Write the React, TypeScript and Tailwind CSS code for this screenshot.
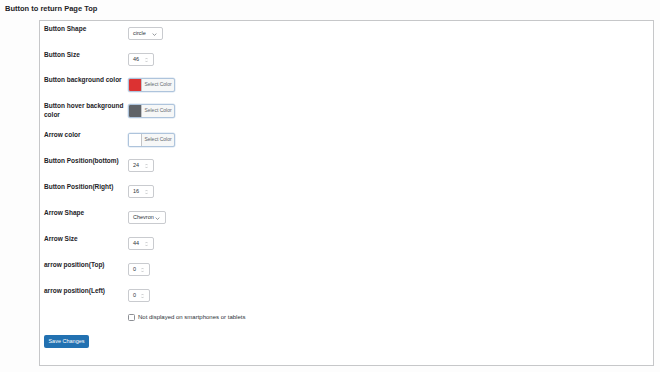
import React from "react";

const font = { fontFamily: '"Liberation Sans", Arial, sans-serif' };

function Label({ children }: { children: React.ReactNode }) {
  return (
    <div className="w-[84px] shrink-0 whitespace-nowrap text-[6.5px] font-bold leading-[9px] text-[#1d2327]">
      {children}
    </div>
  );
}

function SelectBox({ value, w }: { value: string; w: string }) {
  return (
    <div
      className={`mt-[3px] flex h-[13px] ${w} items-center justify-between rounded-[2px] border border-[#c9cbcf] bg-white pl-[4px] pr-[5px] text-[5.5px] text-[#2c3338]`}
    >
      <span>{value}</span>
      <svg width="5" height="3" viewBox="0 0 5 3" className="mt-[1px]">
        <path d="M0.6 0.6 L2.5 2.4 L4.4 0.6" fill="none" stroke="#50575e" strokeWidth="0.6" />
      </svg>
    </div>
  );
}

function NumberBox({ value, w }: { value: string; w: string }) {
  return (
    <div
      className={`mt-[3px] flex h-[13px] ${w} items-center justify-between rounded-[2px] border border-[#c9cbcf] bg-white pl-[4px] pr-[5px] text-[5.5px] text-[#2c3338]`}
    >
      <span>{value}</span>
      <svg width="3" height="6" viewBox="0 0 3 6">
        <path d="M0.4 2.2 L1.5 1 L2.6 2.2 M0.4 3.8 L1.5 5 L2.6 3.8" fill="none" stroke="#9ca0a5" strokeWidth="0.5" />
      </svg>
    </div>
  );
}

function ColorBox({ color }: { color: string }) {
  return (
    <div className="mt-[3px] flex h-[14px] w-[47px] overflow-hidden rounded-[2px] border border-[#aec4dc] bg-[#f6f7f7] shadow-[0_0_0_0.5px_#d6e2ef]">
      <div className="h-full w-[13px] border-r border-[#c3c4c7]" style={{ backgroundColor: color }} />
      <div className="flex flex-1 items-center justify-center text-[5px] text-[#646970]">Select Color</div>
    </div>
  );
}

function Row({ h, label, children }: { h: string; label: React.ReactNode; children: React.ReactNode }) {
  return (
    <div className={`flex ${h}`}>
      <Label>{label}</Label>
      <div>{children}</div>
    </div>
  );
}

export default function App() {
  return (
    <div className="h-[372px] w-[660px] bg-[#fdfdfd]" style={font}>
      <div className="pl-[5px] pt-[4px] text-[7.5px] font-bold leading-[10px] text-[#1d2327]">
        Button to return Page Top
      </div>
      <div className="ml-[39px] mt-[6px] h-[346px] w-[615px] border border-[#c6c7c9] bg-white pl-[4px] pt-[3px]">
        <Row h="h-[26px]" label="Button Shape">
          <SelectBox value="circle" w="w-[35px]" />
        </Row>
        <Row h="h-[25px]" label="Button Size">
          <NumberBox value="46" w="w-[26px]" />
        </Row>
        <Row h="h-[26px]" label="Button background color">
          <ColorBox color="#dc3232" />
        </Row>
        <Row h="h-[29px]" label={<>Button hover background<br />color</>}>
          <ColorBox color="#5f6368" />
        </Row>
        <Row h="h-[26px]" label="Arrow color">
          <ColorBox color="#ffffff" />
        </Row>
        <Row h="h-[26px]" label="Button Position(bottom)">
          <NumberBox value="24" w="w-[26px]" />
        </Row>
        <Row h="h-[26px]" label="Button Position(Right)">
          <NumberBox value="16" w="w-[26px]" />
        </Row>
        <Row h="h-[26px]" label="Arrow Shape">
          <SelectBox value="Chevron" w="w-[38px]" />
        </Row>
        <Row h="h-[26px]" label="Arrow Size">
          <NumberBox value="44" w="w-[26px]" />
        </Row>
        <Row h="h-[26px]" label="arrow position(Top)">
          <NumberBox value="0" w="w-[22px]" />
        </Row>
        <Row h="h-[25px]" label="arrow position(Left)">
          <NumberBox value="0" w="w-[22px]" />
        </Row>
        <div className="flex h-[24px] items-start pl-[84px] pt-[3px]">
          <div className="h-[7px] w-[7px] rounded-[1.5px] border border-[#8c8f94] bg-white" />
          <span className="ml-[3px] text-[6px] leading-[7px] text-[#2c3338]">
            Not displayed on smartphones or tablets
          </span>
        </div>
        <div className="flex h-[13px] w-[45px] items-center justify-center rounded-[2px] bg-[#2271b1] text-[5.5px] text-white">
          Save Changes
        </div>
      </div>
    </div>
  );
}
